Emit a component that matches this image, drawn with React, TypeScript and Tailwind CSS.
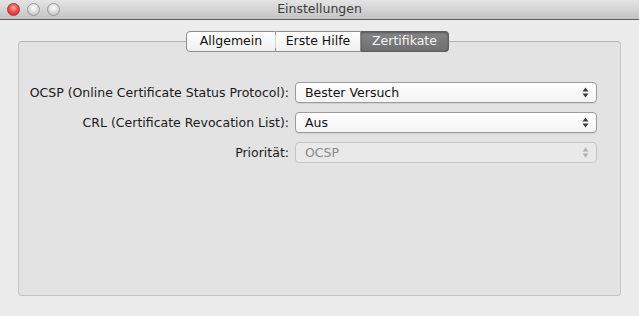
import React from "react";

const font = { fontFamily: '"DejaVu Sans", "Liberation Sans", Arial, sans-serif' };

function Light({ red }: { red?: boolean }) {
  return red ? (
    <div className="w-[13px] h-[13px] rounded-full border border-[#a8353a] bg-[radial-gradient(circle_at_50%_35%,#ffb0ac_0%,#f0504a_45%,#c4262a_100%)]" />
  ) : (
    <div className="w-[13px] h-[13px] rounded-full border border-[#9a9a9a] bg-[radial-gradient(circle_at_50%_35%,#ffffff_0%,#dcdcdc_50%,#b4b4b4_100%)]" />
  );
}

function Arrows({ disabled }: { disabled?: boolean }) {
  const c = disabled ? "#b0b0b0" : "#3a3a3a";
  return (
    <svg width="7" height="11" viewBox="0 0 7 11">
      <path d="M3.5 0.5 L6.5 4.5 L0.5 4.5 Z" fill={c} />
      <path d="M3.5 10.5 L6.5 6.5 L0.5 6.5 Z" fill={c} />
    </svg>
  );
}

function Select({ value, disabled }: { value: string; disabled?: boolean }) {
  return (
    <div
      className={
        "w-[302px] h-[21px] rounded-[4px] border flex items-center justify-between pl-[9px] pr-[7px] text-[12.5px] " +
        (disabled
          ? "border-[#c6c6c6] bg-[#e9e9e9] text-[#8a8a8a]"
          : "border-[#9c9c9c] bg-[linear-gradient(#ffffff,#f4f4f4)] text-[#111] shadow-[0_1px_0_rgba(0,0,0,0.08)]")
      }
    >
      <span className="leading-none pt-[1px]">{value}</span>
      <Arrows disabled={disabled} />
    </div>
  );
}

function Row({ label, value, disabled }: { label: string; value: string; disabled?: boolean }) {
  return (
    <div className="flex items-center h-[21px]">
      <div className="w-[276px] text-right text-[12.5px] text-[#1a1a1a] pr-[6px] whitespace-nowrap pt-[1px]">{label}</div>
      <Select value={value} disabled={disabled} />
    </div>
  );
}

export default function App() {
  return (
    <div className="w-[639px] h-[316px] bg-[#ececec] flex flex-col overflow-hidden" style={font}>
      <div className="h-[20px] shrink-0 bg-[linear-gradient(#e4e4e4,#c4c4c4)] border-b border-[#5d5d5d] flex items-center relative">
        <div className="flex items-center gap-[7px] pl-[7px]">
          <Light red />
          <Light />
          <Light />
        </div>
        <div className="absolute inset-0 flex items-center justify-center text-[12.5px] text-[#3d3d3d]">
          Einstellungen
        </div>
      </div>
      <div className="flex flex-col pt-[11px]">
        <div className="relative z-10 flex ml-[186px] h-[21px] text-[12.5px]">
          <div className="w-[90px] flex items-center justify-center rounded-l-[4px] border border-[#8e8e8e] bg-[linear-gradient(#ffffff,#f0f0f0)] text-[#111]">
            Allgemein
          </div>
          <div className="w-[85px] flex items-center justify-center border-y border-r border-[#8e8e8e] bg-[linear-gradient(#ffffff,#f0f0f0)] text-[#111] relative">
            <span className="absolute left-0 top-[3px] bottom-[3px] w-px bg-[#d6d6d6] -ml-px" />
            Erste Hilfe
          </div>
          <div className="w-[88px] flex items-center justify-center rounded-r-[4px] border-y border-r border-[#5e5e5e] bg-[linear-gradient(#858585,#6f6f6f)] text-[#f4f4f4] shadow-[inset_0_1px_2px_rgba(0,0,0,0.35)]">
            Zertifikate
          </div>
        </div>
        <div className="mx-[18px] -mt-[11px] h-[255px] rounded-[4px] border border-[#c4c4c4] border-t-[#b2b2b2] bg-[#e3e3e3] pt-[40px] flex flex-col gap-[9px]">
          <Row label="OCSP (Online Certificate Status Protocol):" value="Bester Versuch" />
          <Row label="CRL (Certificate Revocation List):" value="Aus" />
          <Row label="Priorität:" value="OCSP" disabled />
        </div>
      </div>
    </div>
  );
}
